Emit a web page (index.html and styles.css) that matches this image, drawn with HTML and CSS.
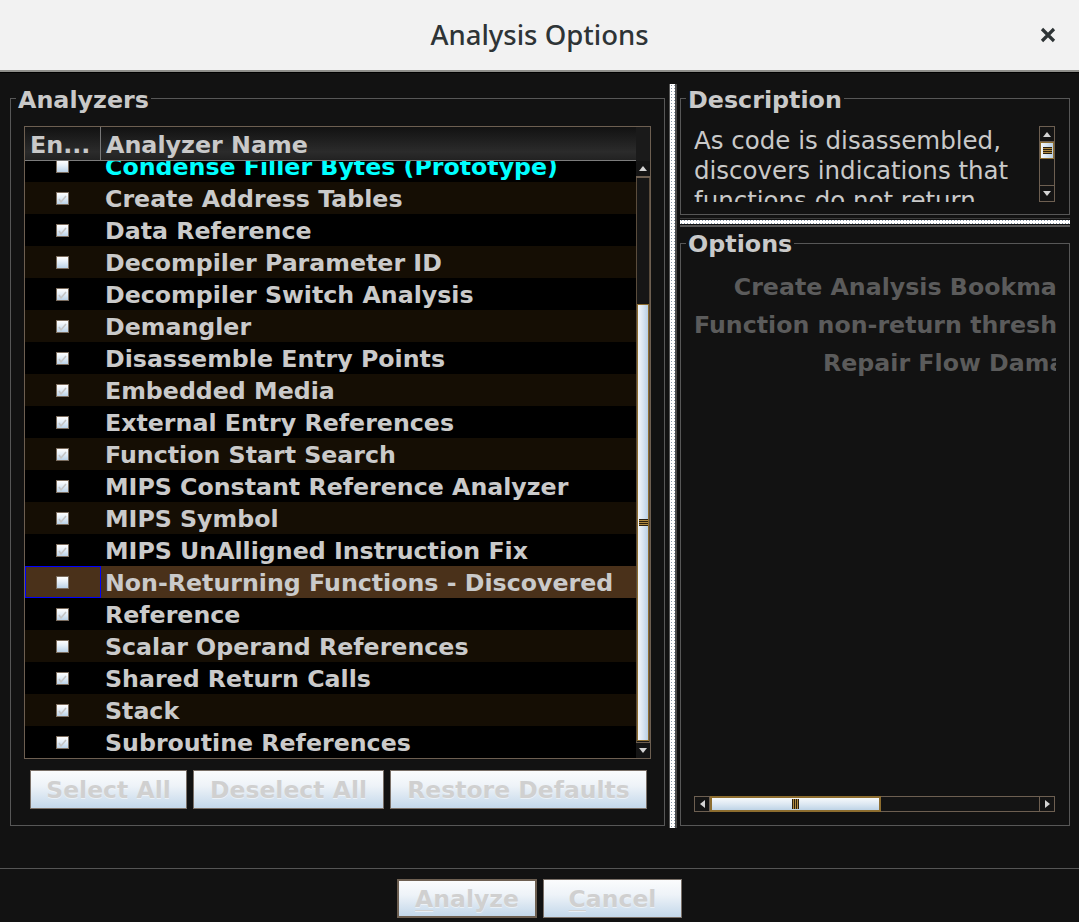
FILE: index.html
```html
<!DOCTYPE html>
<html lang="en">
<head>
<meta charset="utf-8">
<title>Analysis Options</title>
<link rel="stylesheet" href="styles.css">
</head>
<body>
<div class="window">
  <header class="titlebar">
    <span class="tb-spacer"></span>
    <h1 class="title">Analysis Options</h1>
    <div class="tb-right">
      <button class="close" aria-label="Close">
        <svg width="16" height="16" viewBox="0 0 16 16"><path d="M2 2 L14 14 M14 2 L2 14" stroke="#2e3436" stroke-width="3.2" stroke-linecap="butt"/></svg>
      </button>
    </div>
  </header>

  <main class="main">
    <fieldset class="group analyzers">
      <legend>Analyzers</legend>
      <div class="table">
        <div class="thead">
          <div class="th col-en">En...</div>
          <div class="th col-name">Analyzer Name</div>
        </div>
        <div class="corner"></div>
        <div class="viewport">
          <div class="rows">
            <div class="row"><div class="cell col-en"><span class="cb"></span></div><div class="cell col-name proto">Condense Filler Bytes (Prototype)</div></div>
            <div class="row"><div class="cell col-en"><span class="cb on"></span></div><div class="cell col-name">Create Address Tables</div></div>
            <div class="row"><div class="cell col-en"><span class="cb on"></span></div><div class="cell col-name">Data Reference</div></div>
            <div class="row"><div class="cell col-en"><span class="cb"></span></div><div class="cell col-name">Decompiler Parameter ID</div></div>
            <div class="row"><div class="cell col-en"><span class="cb on"></span></div><div class="cell col-name">Decompiler Switch Analysis</div></div>
            <div class="row"><div class="cell col-en"><span class="cb on"></span></div><div class="cell col-name">Demangler</div></div>
            <div class="row"><div class="cell col-en"><span class="cb on"></span></div><div class="cell col-name">Disassemble Entry Points</div></div>
            <div class="row"><div class="cell col-en"><span class="cb on"></span></div><div class="cell col-name">Embedded Media</div></div>
            <div class="row"><div class="cell col-en"><span class="cb on"></span></div><div class="cell col-name">External Entry References</div></div>
            <div class="row"><div class="cell col-en"><span class="cb on"></span></div><div class="cell col-name">Function Start Search</div></div>
            <div class="row"><div class="cell col-en"><span class="cb on"></span></div><div class="cell col-name">MIPS Constant Reference Analyzer</div></div>
            <div class="row"><div class="cell col-en"><span class="cb on"></span></div><div class="cell col-name">MIPS Symbol</div></div>
            <div class="row"><div class="cell col-en"><span class="cb on"></span></div><div class="cell col-name">MIPS UnAlligned Instruction Fix</div></div>
            <div class="row selected"><div class="cell col-en focus"><span class="cb"></span></div><div class="cell col-name">Non-Returning Functions - Discovered</div></div>
            <div class="row"><div class="cell col-en"><span class="cb on"></span></div><div class="cell col-name">Reference</div></div>
            <div class="row"><div class="cell col-en"><span class="cb"></span></div><div class="cell col-name">Scalar Operand References</div></div>
            <div class="row"><div class="cell col-en"><span class="cb on"></span></div><div class="cell col-name">Shared Return Calls</div></div>
            <div class="row"><div class="cell col-en"><span class="cb on"></span></div><div class="cell col-name">Stack</div></div>
            <div class="row"><div class="cell col-en"><span class="cb on"></span></div><div class="cell col-name">Subroutine References</div></div>
          </div>
        </div>
        <div class="vscroll">
          <div class="sb-btn up"><svg width="8" height="5" viewBox="0 0 8 5"><path d="M0 5 L4 0 L8 5 Z" fill="#d4d4d4"/></svg></div>
          <div class="sb-track v-track">
            <div class="thumb v-thumb"><span class="grip-h"></span></div>
          </div>
          <div class="sb-btn down"><svg width="8" height="5" viewBox="0 0 8 5"><path d="M0 0 L4 5 L8 0 Z" fill="#d4d4d4"/></svg></div>
        </div>
      </div>
      <div class="btnrow">
        <button class="btn w-select" disabled>Select All</button>
        <button class="btn w-deselect" disabled>Deselect All</button>
        <button class="btn w-restore" disabled>Restore Defaults</button>
      </div>
    </fieldset>

    <div class="vdivider"><div class="strip"></div></div>

    <div class="rightcol">
      <fieldset class="group desc">
        <legend>Description</legend>
        <div class="desc-body">
          <div class="desc-text">As code is disassembled, discovers indications that functions do not return</div>
          <div class="dscroll">
            <div class="sb-btn small up"><svg width="8" height="5" viewBox="0 0 8 5"><path d="M0 5 L4 0 L8 5 Z" fill="#d4d4d4"/></svg></div>
            <div class="thumb d-thumb"><span class="grip-h"></span></div>
            <div class="d-track"></div>
            <div class="sb-btn small down"><svg width="8" height="5" viewBox="0 0 8 5"><path d="M0 0 L4 5 L8 0 Z" fill="#d4d4d4"/></svg></div>
          </div>
        </div>
      </fieldset>

      <div class="hdivider"><div class="strip"></div></div>

      <fieldset class="group options">
        <legend>Options</legend>
        <div class="opt-view">
          <div class="opt-col">
            <div class="opt-label">Create Analysis Bookmarks</div>
            <div class="opt-label">Function non-return threshold</div>
            <div class="opt-label">Repair Flow Damage</div>
          </div>
        </div>
        <div class="hscroll">
          <div class="hs-btn left"><svg width="5" height="8" viewBox="0 0 5 8"><path d="M5 0 L0 4 L5 8 Z" fill="#d4d4d4"/></svg></div>
          <div class="hs-track">
            <div class="thumb h-thumb"><span class="grip-v"></span></div>
          </div>
          <div class="hs-btn right"><svg width="5" height="8" viewBox="0 0 5 8"><path d="M0 0 L5 4 L0 8 Z" fill="#d4d4d4"/></svg></div>
        </div>
      </fieldset>
    </div>
  </main>

  <footer class="footer">
    <button class="btn fbtn analyze" disabled><u>A</u>nalyze</button>
    <button class="btn fbtn cancel" disabled><u>C</u>ancel</button>
  </footer>
</div>
</body>
</html>
```

FILE: styles.css
```css
* { box-sizing: border-box; }

html, body {
  margin: 0;
  padding: 0;
  background: #121212;
}

body {
  width: 1079px;
  height: 922px;
  overflow: hidden;
  font-family: "DejaVu Sans", "Liberation Sans", sans-serif;
  color: #c9c9c9;
}

.window {
  width: 1079px;
  height: 922px;
  display: flex;
  flex-direction: column;
}

/* ---------- title bar ---------- */
.titlebar {
  height: 72px;
  flex: none;
  background: #f2f2f2;
  border-bottom: 2px solid #8f8f8b;
  box-shadow: 0 1px 0 #000;
  display: grid;
  grid-template-columns: 1fr auto 1fr;
  align-items: center;
}

.title {
  margin: 0;
  font-family: "Noto Sans", "Open Sans", sans-serif;
  font-weight: 500;
  font-size: 27.5px;
  color: #2e3436;
  letter-spacing: 0;
  padding-bottom: 2px;
}

.tb-right {
  display: flex;
  justify-content: flex-end;
  padding-right: 23px;
}

.close {
  border: 0;
  background: transparent;
  padding: 0;
  width: 16px;
  height: 16px;
  display: block;
}
.close svg { display: block; }

/* ---------- main area ---------- */
.main {
  height: 796px;
  flex: none;
  display: flex;
  align-items: flex-start;
  padding: 12px 9px 0 10px;
}

.group {
  margin: 0;
  border: 1px solid #575757;
  min-width: 0;
}

.group legend {
  font-weight: bold;
  font-size: 23.8px;
  line-height: 25px;
  padding: 4px 2px 0 2px;
  margin-left: -8px;
  color: #c9c9c9;
}

.analyzers {
  width: 655px;
  height: 742px;
  padding: 13px 12px 0 13px;
  display: flex;
  flex-direction: column;
}

/* ---------- table ---------- */
.table {
  width: 627px;
  height: 633px;
  flex: none;
  border: 1px solid #6d5f51;
  display: grid;
  grid-template-columns: 611px 14px;
  grid-template-rows: 34px 597px;
  background: #000;
}

.thead {
  display: flex;
  background: linear-gradient(#121212 0%, #1c1c1c 30%, #2b2b2b 75%, #222 100%);
  border-bottom: 1px solid #7c7c7c;
}

.th {
  font-weight: bold;
  font-size: 23.8px;
  line-height: 30px;
  padding-top: 3px;
  color: #c9c9c9;
  white-space: nowrap;
}

.th.col-en {
  width: 76px;
  padding-left: 5px;
  border-right: 1px solid #777;
  overflow: hidden;
}
.th.col-name {
  padding-left: 5px;
}

.corner {
  background: #1a1a1a;
}

.viewport {
  overflow: hidden;
}

.rows {
  margin-top: -11px;
}

.row {
  height: 32px;
  display: flex;
  background: #000;
}
.row:nth-child(even) {
  background: #150e04;
}
.row.selected {
  background: #4a311a;
}

.cell {
  font-weight: bold;
  font-size: 23.7px;
  line-height: 32px;
  white-space: nowrap;
  color: #cacaca;
}

.cell.col-en {
  width: 76px;
  flex: none;
  display: flex;
  align-items: center;
  padding-left: 31px;
}
.cell.col-en.focus {
  box-shadow: inset 0 0 0 1px #0000ff;
}
.cell.col-name {
  padding-left: 4px;
  padding-top: 2px;
  line-height: 30px;
}
.cell.proto {
  color: #00ffff;
}

.cb {
  display: block;
  width: 13px;
  height: 13px;
  border: 1px solid #7b6d5f;
  background: linear-gradient(#ffffff, #e8f0f8 40%, #bcd3e8);
}
.cb.on {
  background:
    url("data:image/svg+xml,%3Csvg xmlns='http://www.w3.org/2000/svg' width='11' height='11'%3E%3Cpath d='M2 6 L4 9 L9 3' stroke='%23c6c6c6' stroke-width='1.6' fill='none'/%3E%3C/svg%3E") no-repeat center,
    linear-gradient(#ffffff, #e8f0f8 40%, #bcd3e8);
}

/* ---------- vertical scrollbar ---------- */
.vscroll {
  display: flex;
  flex-direction: column;
  background: #161616;
}

.sb-btn {
  height: 17px;
  flex: none;
  display: flex;
  align-items: center;
  justify-content: center;
  background: #141414;
}
.sb-btn.up { border-bottom: 2px solid #6d5f51; }
.sb-btn.down { border-top: 1px solid #6d5f51; height: 16px; }

.v-track {
  flex: 1;
  display: flex;
  flex-direction: column;
  padding: 126px 0 1px 0;
  border-left: 1px solid #5a4c3c;
  border-right: 1px solid #5a4c3c;
}

.thumb {
  display: flex;
  align-items: center;
  justify-content: center;
  border: 1px solid #8d6d2f;
}

.v-thumb {
  flex: 1;
  background: linear-gradient(90deg, #f4f7fa, #d6e3ef 55%, #b9cfe4);
}

.grip-h {
  display: block;
  width: 9px;
  height: 7px;
  background: repeating-linear-gradient(#2a2010 0 1px, #b08a40 1px 2px);
}

/* ---------- buttons ---------- */
.btnrow {
  display: flex;
  gap: 6px;
  margin-top: 11px;
  padding-left: 6px;
}

.btn {
  height: 39px;
  border: 1px solid #7a7068;
  background: linear-gradient(#fbfcfd, #eef3f8 40%, #d5e3f0 75%, #c3d7ea);
  font-family: "DejaVu Sans", sans-serif;
  font-weight: bold;
  font-size: 23.5px;
  color: #d0d0d0;
  padding: 1px 0 0 0;
  text-shadow: 0 1px 0 rgba(255,255,255,0.5);
  white-space: nowrap;
}
.btn u { text-decoration-thickness: 1px; text-underline-offset: 3px; }

.w-select { width: 157px; }
.w-deselect { width: 191px; }
.w-restore { width: 257px; }

/* ---------- dividers ---------- */
.vdivider {
  width: 15px;
  flex: none;
  height: 744px;
  padding-left: 4px;
}
.vdivider .strip {
  width: 8px;
  height: 100%;
  border-left: 1px solid #555;
  border-right: 2px solid #4a4a4a;
  background-color: #fff;
  background-image: radial-gradient(circle, #8898a8 0.8px, transparent 1px);
  background-size: 3px 3px;
}

.strip { display: block; }

.rightcol {
  width: 390px;
  height: 742px;
  flex: none;
  display: flex;
  flex-direction: column;
}

.hdivider {
  height: 15px;
  flex: none;
  padding-top: 3px;
}
.hdivider .strip {
  height: 9px;
  border-top: 1px solid #3a3a3a;
  border-bottom: 2px solid #555;
  background-color: #fff;
  background-image: radial-gradient(circle, #8898a8 0.8px, transparent 1px);
  background-size: 3px 3px;
  box-shadow: inset 0 1px 0 #121212, inset 0 -1px 0 #121212;
}

/* ---------- description ---------- */
.desc {
  height: 131px;
  flex: none;
  padding: 13px 13px 12px 13px;
}

.desc-body {
  display: flex;
  gap: 3px;
  height: 76px;
}

.desc-text {
  width: 342px;
  height: 76px;
  overflow: hidden;
  font-size: 24.5px;
  line-height: 30px;
  color: #c9c9c9;
  white-space: normal;
}

.dscroll {
  width: 16px;
  height: 76px;
  flex: none;
  display: flex;
  flex-direction: column;
  border: 1px solid #6d5f51;
  background: #161616;
}
.sb-btn.small { height: 15px; }
.sb-btn.small.up { border-bottom: 1px solid #6d5f51; }
.sb-btn.small.down { border-top: 1px solid #6d5f51; height: 16px; margin-top: auto; }

.d-thumb {
  height: 17px;
  flex: none;
  background: linear-gradient(90deg, #f4f7fa, #d6e3ef 55%, #b9cfe4);
}
.d-track { flex: 1; }

/* ---------- options ---------- */
.options {
  flex: 1;
  padding: 11px 13px 13px 13px;
  display: flex;
  flex-direction: column;
}
.options legend {
  padding-top: 2px;
}

.opt-view {
  flex: 1;
  overflow: hidden;
}

.opt-col {
  width: max-content;
}

.opt-label {
  text-align: right;
  font-weight: bold;
  font-size: 23.7px;
  line-height: 38px;
  color: #5b5b5b;
  white-space: nowrap;
  padding-right: 2px;
}

.hscroll {
  height: 16px;
  flex: none;
  display: flex;
  margin-right: 1px;
  background: #141414;
}

.hs-btn {
  width: 16px;
  flex: none;
  display: flex;
  align-items: center;
  justify-content: center;
  border: 1px solid #6d5f51;
  background: #141414;
}

.hs-track {
  flex: 1;
  display: flex;
  border-top: 1px solid #6d5f51;
  border-bottom: 1px solid #6d5f51;
}

.h-thumb {
  width: 171px;
  margin-top: -1px;
  margin-bottom: -1px;
  border: 2px solid #8d6d2f;
  background: linear-gradient(#f6f9fb, #dde8f2 50%, #bed3e6);
}

.grip-v {
  display: block;
  width: 7px;
  height: 10px;
  background: repeating-linear-gradient(90deg, #2a2010 0 1px, #b08a40 1px 2px);
}

/* ---------- footer ---------- */
.footer {
  flex: 1;
  border-top: 1px solid #555;
  display: flex;
  justify-content: center;
  gap: 6px;
  padding-top: 10px;
}

.fbtn {
  height: 39px;
}
.analyze {
  width: 140px;
  border: 2px solid #6e6052;
}
.cancel {
  width: 139px;
}
```
